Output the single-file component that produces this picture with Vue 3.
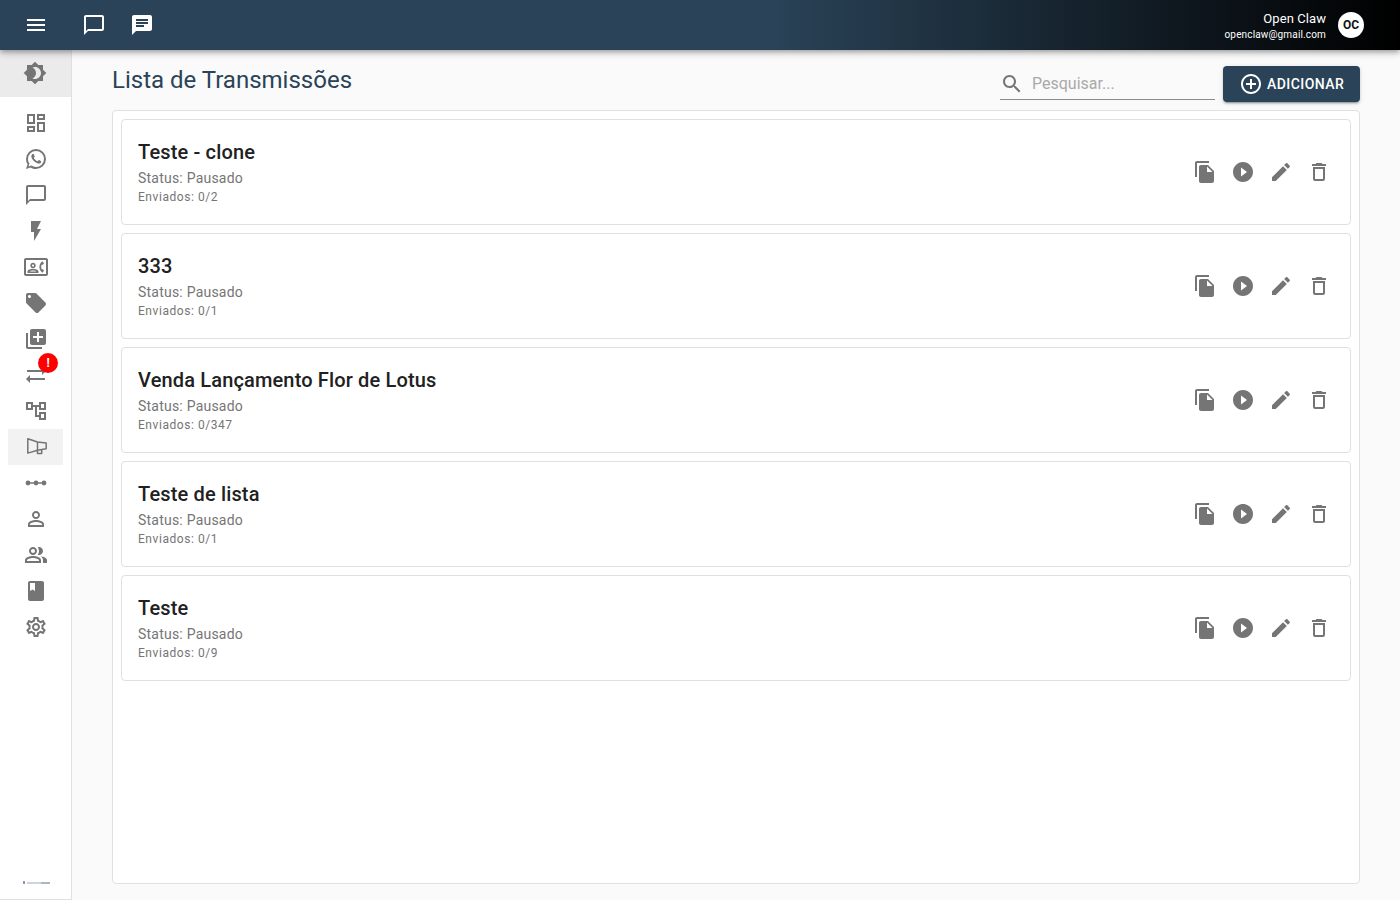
<script setup>
const icons = {
  theme: 'M20 8.69V4h-4.69L12 .69 8.69 4H4v4.69L.69 12 4 15.31V20h4.69L12 23.31 15.31 20H20v-4.69L23.31 12 20 8.69zM12 18c-.89 0-1.74-.2-2.5-.55C11.56 16.5 13 14.42 13 12s-1.44-4.5-3.5-5.45C10.26 6.2 11.11 6 12 6c3.31 0 6 2.69 6 6s-2.69 6-6 6z',
  menu: 'M3 18h18v-2H3v2zm0-5h18v-2H3v2zm0-7v2h18V6H3z',
  chatOutline: 'M20 2H4c-1.1 0-2 .9-2 2v18l4-4h14c1.1 0 2-.9 2-2V4c0-1.1-.9-2-2-2zm0 14H6l-2 2V4h16v12z',
  chat: 'M20 2H4c-1.1 0-1.99.9-1.99 2L2 22l4-4h14c1.1 0 2-.9 2-2V4c0-1.1-.9-2-2-2zM6 9h12v2H6V9zm8 5H6v-2h8v2zm4-6H6V6h12v2z',
  search: 'M15.5 14h-.79l-.28-.27C15.41 12.59 16 11.11 16 9.5 16 5.91 13.09 3 9.5 3S3 5.91 3 9.5 5.91 16 9.5 16c1.61 0 3.09-.59 4.23-1.57l.27.28v.79l5 4.99L20.49 19l-4.99-5zm-6 0C7.01 14 5 11.99 5 9.5S7.01 5 9.5 5 14 7.01 14 9.5 11.99 14 9.5 14z',
  add: 'M13 7h-2v4H7v2h4v4h2v-4h4v-2h-4V7zm-1-5C6.48 2 2 6.48 2 12s4.48 10 10 10 10-4.48 10-10S17.52 2 12 2zm0 18c-4.41 0-8-3.59-8-8s3.59-8 8-8 8 3.59 8 8-3.59 8-8 8z',
  copy: 'M16 1H4c-1.1 0-2 .9-2 2v14h2V3h12V1zm-1 4l6 6v10c0 1.1-.9 2-2 2H7.99C6.89 23 6 22.1 6 21l.01-14c0-1.1.89-2 1.99-2h7zm-1 7h5.5L14 6.5V12z',
  play: 'M12 2C6.48 2 2 6.48 2 12s4.48 10 10 10 10-4.48 10-10S17.52 2 12 2zm-2 14.5v-9l6 4.5-6 4.5z',
  edit: 'M3 17.25V21h3.75L17.81 9.94l-3.75-3.75L3 17.25zM20.71 7.04c.39-.39.39-1.02 0-1.41l-2.34-2.34c-.39-.39-1.02-.39-1.41 0l-1.83 1.83 3.75 3.75 1.83-1.83z',
  trash: 'M6 19c0 1.1.9 2 2 2h8c1.1 0 2-.9 2-2V7H6v12zM8 9h8v10H8V9zm7.5-5l-1-1h-5l-1 1H5v2h14V4z'
}

const navItems = [
  { d: 'M19 5v2h-4V5h4M9 5v6H5V5h4m10 8v6h-4v-6h4M9 17v2H5v-2h4M21 3h-8v6h8V3zM11 3H3v10h8V3zm10 8h-8v10h8V11zm-10 4H3v6h8v-6z' },
  { d: 'M16.75 13.96c.25.13.41.2.46.3.06.11.04.61-.21 1.18-.2.56-1.24 1.1-1.7 1.12-.46.02-.47.36-2.96-.73-2.49-1.09-3.99-3.75-4.11-3.92-.12-.17-.96-1.38-.92-2.61.05-1.22.69-1.8.95-2.04.24-.26.51-.29.68-.26h.47c.15 0 .36-.06.55.45l.69 1.87c.06.13.1.28.01.44l-.27.41-.39.42c-.12.12-.26.25-.12.5.12.26.62 1.09 1.32 1.78.91.88 1.71 1.17 1.95 1.3.24.14.39.12.54-.04l.81-.94c.19-.25.35-.19.58-.11l1.67.88M12 2a10 10 0 0 1 10 10 10 10 0 0 1-10 10c-1.97 0-3.8-.57-5.35-1.55L2 22l1.55-4.65A9.969 9.969 0 0 1 2 12 10 10 0 0 1 12 2m0 2a8 8 0 0 0-8 8c0 1.72.54 3.31 1.46 4.61L4.5 19.5l2.89-.96A7.95 7.95 0 0 0 12 20a8 8 0 0 0 8-8 8 8 0 0 0-8-8z' },
  { d: 'M20 2H4c-1.1 0-2 .9-2 2v18l4-4h14c1.1 0 2-.9 2-2V4c0-1.1-.9-2-2-2zm0 14H6l-2 2V4h16v12z' },
  { d: 'M7 2v11h3v9l7-12h-4l4-8z' },
  { d: 'M22 3H2C.9 3 0 3.9 0 5v14c0 1.1.9 2 2 2h20c1.1 0 2-.9 2-2V5c0-1.1-.9-2-2-2zm0 16H2V5h20v14zM9 7.7c-1.5 0-2.7 1.2-2.7 2.7S7.5 13.1 9 13.1s2.7-1.2 2.7-2.7S10.5 7.7 9 7.7zm0 1.7c.55 0 1 .45 1 1s-.45 1-1 1-1-.45-1-1 .45-1 1-1zM3.5 18v-1.4c0-1.9 3.6-2.8 5.5-2.8s5.5.9 5.5 2.8V18h-11zm2.2-1.6h6.6c-.6-.5-2.1-.9-3.3-.9s-2.7.4-3.3.9zM18.3 6.3l1.7 1.9-1.1 1.5h-1.3c-.25.7-.35 1.5-.35 2.3s.1 1.6.35 2.3h1.3l1.1 1.5-1.7 1.9c-1.7-1.3-2.9-3.4-2.9-5.7s1.2-4.4 2.9-5.7z', rule: 'evenodd' },
  { d: 'M21.41 11.58l-9-9C12.05 2.22 11.55 2 11 2H4c-1.1 0-2 .9-2 2v7c0 .55.22 1.05.59 1.42l9 9c.36.36.86.58 1.41.58.55 0 1.05-.22 1.41-.59l7-7c.37-.36.59-.86.59-1.41 0-.55-.23-1.06-.59-1.42zM5.5 7C4.67 7 4 6.33 4 5.5S4.67 4 5.5 4 7 4.67 7 5.5 6.33 7 5.5 7z' },
  { d: 'M4 6H2v14c0 1.1.9 2 2 2h14v-2H4V6zm16-4H8c-1.1 0-2 .9-2 2v12c0 1.1.9 2 2 2h12c1.1 0 2-.9 2-2V4c0-1.1-.9-2-2-2zm-1 9h-4v4h-2v-4H9V9h4V5h2v4h4v2z' },
  { d: 'M22 8l-4-4v3H3v2h15v3l4-4zM2 16l4 4v-3h15v-2H6v-3l-4 4z', badge: '!' },
  { d: 'M22 11V3h-7v3H9V3H2v8h7V8h2v10h4v3h7v-8h-7v3h-2V8h2v3h7zM7 9H4V5h3v4zm10 6h3v4h-3v-4zm0-10h3v4h-3V5z' },
  { d: 'M3.8 3.8l9.7 3.2 8.7 1.1v5.6l-8.7 1.6-9.7 2.8zM13.5 7v8.3M13.5 15.3v3.2h4.2v-3.9', stroke: true, active: true },
  { d: 'M4 9.6a2.4 2.4 0 1 1 0 4.8 2.4 2.4 0 1 1 0-4.8zM12 9.6a2.4 2.4 0 1 1 0 4.8 2.4 2.4 0 1 1 0-4.8zM20 9.6a2.4 2.4 0 1 1 0 4.8 2.4 2.4 0 1 1 0-4.8zM4 11.3h16v1.4H4z' },
  { d: 'M12 5.9c1.16 0 2.1.94 2.1 2.1s-.94 2.1-2.1 2.1S9.9 9.16 9.9 8s.94-2.1 2.1-2.1m0 9c2.97 0 6.1 1.46 6.1 2.1v1.1H5.9V17c0-.64 3.13-2.1 6.1-2.1M12 4C9.79 4 8 5.79 8 8s1.79 4 4 4 4-1.79 4-4-1.79-4-4-4zm0 9c-2.67 0-8 1.34-8 4v3h16v-3c0-2.66-5.33-4-8-4z' },
  { d: 'M16.67 13.13C18.04 14.06 19 15.32 19 17v3h4v-3c0-2.18-3.57-3.47-6.33-3.87zM15 12c2.21 0 4-1.79 4-4s-1.79-4-4-4c-.47 0-.91.1-1.33.24C14.5 5.27 15 6.58 15 8s-.5 2.73-1.33 3.76c.42.14.86.24 1.33.24zM9 12c2.21 0 4-1.79 4-4s-1.79-4-4-4-4 1.79-4 4 1.79 4 4 4zm0-6c1.1 0 2 .9 2 2s-.9 2-2 2-2-.9-2-2 .9-2 2-2zM9 13c-2.67 0-8 1.34-8 4v3h16v-3c0-2.66-5.33-4-8-4zm6 5H3v-.99C3.2 16.29 6.3 15 9 15s5.8 1.29 6 2v1z' },
  { d: 'M18 2H6c-1.1 0-2 .9-2 2v16c0 1.1.9 2 2 2h12c1.1 0 2-.9 2-2V4c0-1.1-.9-2-2-2zM6 4h5v8l-2.5-1.5L6 12V4z' },
  { d: 'M19.43 12.98c.04-.32.07-.64.07-.98 0-.34-.03-.66-.07-.98l2.11-1.65c.19-.15.24-.42.12-.64l-2-3.46c-.09-.16-.26-.25-.44-.25-.06 0-.12.01-.17.03l-2.49 1c-.52-.4-1.08-.73-1.69-.98l-.38-2.65C14.46 2.18 14.25 2 14 2h-4c-.25 0-.46.18-.49.42l-.38 2.65c-.61.25-1.17.59-1.69.98l-2.49-1c-.06-.02-.12-.03-.18-.03-.17 0-.34.09-.43.25l-2 3.46c-.13.22-.07.49.12.64l2.11 1.65c-.04.32-.07.65-.07.98 0 .33.03.66.07.98l-2.11 1.65c-.19.15-.24.42-.12.64l2 3.46c.09.16.26.25.44.25.06 0 .12-.01.17-.03l2.49-1c.52.4 1.08.73 1.69.98l.38 2.65c.03.24.24.42.49.42h4c.25 0 .46-.18.49-.42l.38-2.65c.61-.25 1.17-.59 1.69-.98l2.49 1c.06.02.12.03.18.03.17 0 .34-.09.43-.25l2-3.46c.12-.22.07-.49-.12-.64l-2.11-1.65zm-1.98-1.71c.04.31.05.52.05.73 0 .21-.02.43-.05.73l-.14 1.13.89.7 1.08.84-.7 1.21-1.27-.51-1.04-.42-.9.68c-.43.32-.84.56-1.25.73l-1.06.43-.16 1.13-.2 1.35h-1.4l-.19-1.35-.16-1.13-1.06-.43c-.43-.18-.83-.41-1.23-.71l-.91-.7-1.06.43-1.27.51-.7-1.21 1.08-.84.89-.7-.14-1.13c-.03-.31-.05-.54-.05-.74s.02-.43.05-.73l.14-1.13-.89-.7-1.08-.84.7-1.21 1.27.51 1.04.42.9-.68c.43-.32.84-.56 1.25-.73l1.06-.43.16-1.13.2-1.35h1.39l.19 1.35.16 1.13 1.06.43c.43.18.83.41 1.23.71l.91.7 1.06-.43 1.27-.51.7 1.21-1.07.85-.89.7.14 1.13zM12 8c-2.21 0-4 1.79-4 4s1.79 4 4 4 4-1.79 4-4-1.79-4-4-4zm0 6c-1.1 0-2-.9-2-2s.9-2 2-2 2 .9 2 2-.9 2-2 2z' }
]

const broadcasts = [
  { name: 'Teste - clone', sent: '0/2' },
  { name: '333', sent: '0/1' },
  { name: 'Venda Lançamento Flor de Lotus', sent: '0/347' },
  { name: 'Teste de lista', sent: '0/1' },
  { name: 'Teste', sent: '0/9' }
]

const actions = [icons.copy, icons.play, icons.edit, icons.trash]
</script>

<template>
  <div class="app">
    <header class="topbar">
      <div class="top-left">
        <button class="top-btn menu-btn"><svg class="ic" viewBox="0 0 24 24"><path :d="icons.menu" /></svg></button>
        <button class="top-btn"><svg class="ic" viewBox="0 0 24 24"><path :d="icons.chatOutline" /></svg></button>
        <button class="top-btn"><svg class="ic" viewBox="0 0 24 24"><path :d="icons.chat" /></svg></button>
      </div>
      <div class="user">
        <div class="user-text">
          <div class="user-name">Open Claw</div>
          <div class="user-mail">openclaw@gmail.com</div>
        </div>
        <div class="avatar">OC</div>
      </div>
    </header>

    <div class="body">
      <aside class="sidebar">
        <div class="theme-row"><svg class="ic" viewBox="0 0 24 24"><path :d="icons.theme" /></svg></div>
        <nav class="nav">
          <div v-for="(item, i) in navItems" :key="i" class="nav-item" :class="{ active: item.active }">
            <svg class="ic" :class="{ outline: item.stroke }" viewBox="0 0 24 24"><path :d="item.d" :fill-rule="item.rule" /></svg>
            <span v-if="item.badge" class="badge">{{ item.badge }}</span>
          </div>
        </nav>
        <div class="logo">
          <svg width="27" height="3" viewBox="0 0 27 3">
            <rect x="0" y="0" width="2" height="3" fill="#8a98a8" />
            <rect x="4" y="1" width="14" height="2" fill="#cdd4db" />
            <rect x="18" y="1" width="9" height="2" fill="#aab6c2" />
          </svg>
        </div>
      </aside>

      <main class="main">
        <div class="page-head">
          <h1 class="page-title">Lista de Transmissões</h1>
          <div class="head-tools">
            <label class="search">
              <svg class="ic" viewBox="0 0 24 24"><path :d="icons.search" /></svg>
              <input class="search-input" type="text" placeholder="Pesquisar..." />
            </label>
            <button class="add-btn">
              <svg class="ic" viewBox="0 0 24 24"><path :d="icons.add" /></svg>
              <span>Adicionar</span>
            </button>
          </div>
        </div>

        <section class="paper">
          <article v-for="b in broadcasts" :key="b.name" class="card">
            <div class="card-text">
              <div class="card-title">{{ b.name }}</div>
              <div class="card-status">Status: Pausado</div>
              <div class="card-sent">Enviados: {{ b.sent }}</div>
            </div>
            <div class="card-actions">
              <button v-for="(a, i) in actions" :key="i" class="act-btn">
                <svg class="ic" viewBox="0 0 24 24"><path :d="a" /></svg>
              </button>
            </div>
          </article>
        </section>
      </main>
    </div>
  </div>
</template>

<style>
html, body { margin: 0; height: 100%; overflow: hidden; }
</style>

<style scoped>
* { box-sizing: border-box; }
.app {
  width: 1400px;
  height: 900px;
  display: flex;
  flex-direction: column;
  font-family: Roboto, "Liberation Sans", sans-serif;
  background: #fafafa;
}
button { font-family: inherit; border: 0; background: none; padding: 0; }
.ic { width: 24px; height: 24px; display: block; fill: currentColor; flex: none; }
.ic.outline { fill: none; stroke: currentColor; stroke-width: 1.5; stroke-linejoin: round; }

.topbar {
  height: 50px;
  flex: none;
  display: flex;
  align-items: center;
  justify-content: space-between;
  color: #fff;
  background: linear-gradient(to right, #2a4358 0%, #2a4358 55%, #000 100%);
  box-shadow: 0 2px 4px -1px rgba(0,0,0,.2), 0 4px 5px rgba(0,0,0,.14), 0 1px 10px rgba(0,0,0,.12);
  position: relative;
  z-index: 2;
}
.top-left { display: flex; align-items: center; padding-left: 12px; }
.top-btn { width: 48px; height: 48px; display: flex; align-items: center; justify-content: center; color: #fff; }
.menu-btn { margin-right: 10px; }
.user { display: flex; align-items: center; gap: 12px; padding-right: 36px; }
.user-text { text-align: right; padding-bottom: 1px; }
.user-name { font-size: 13px; line-height: 20px; letter-spacing: .08px; }
.user-mail { font-size: 10px; line-height: 12px; letter-spacing: .15px; }
.avatar {
  width: 26px;
  height: 26px;
  border-radius: 50%;
  background: #fff;
  color: #111;
  font-size: 12px;
  font-weight: 700;
  display: flex;
  align-items: center;
  justify-content: center;
}

.body { flex: 1; display: flex; min-height: 0; }
.sidebar {
  width: 72px;
  flex: none;
  background: #fff;
  border-right: 1px solid #e0e0e0;
  border-bottom: 1px solid #e0e0e0;
  display: flex;
  flex-direction: column;
  color: #757575;
}
.theme-row {
  height: 47px;
  padding: 0 1px 1px 0;
  background: #ebebeb;
  display: flex;
  align-items: center;
  justify-content: center;
  flex: none;
}
.nav { padding: 8px 8px 0; display: flex; flex-direction: column; flex: 1; }
.nav-item {
  position: relative;
  height: 36px;
  padding-left: 16px;
  display: flex;
  align-items: center;
  flex: none;
}
.nav-item.active { background: #f2f2f2; }
.badge {
  position: absolute;
  left: 30px;
  top: -4px;
  width: 20px;
  height: 20px;
  border-radius: 50%;
  background: #f00;
  color: #fff;
  font-size: 12px;
  font-weight: 700;
  display: flex;
  align-items: center;
  justify-content: center;
}
.logo { height: 18px; padding-left: 23px; flex: none; }
.logo svg { display: block; }

.main { flex: 1; min-width: 0; display: flex; flex-direction: column; padding: 0 40px 16px; }
.page-head { height: 60px; flex: none; display: flex; align-items: center; justify-content: space-between; }
.page-title { margin: 0; font-size: 24px; font-weight: 400; line-height: 60px; color: #2a4358; }
.head-tools { display: flex; align-items: center; gap: 8px; padding-top: 8px; }
.search {
  width: 215px;
  height: 32px;
  border-bottom: 1px solid #8c8c8c;
  display: flex;
  align-items: center;
  gap: 8px;
  color: #757575;
}
.search-input {
  flex: 1;
  min-width: 0;
  border: 0;
  outline: 0;
  background: transparent;
  padding: 0;
  font: 400 16px Roboto, sans-serif;
  color: #333;
}
.search-input::placeholder { color: #a9a9a9; opacity: 1; }
.add-btn {
  width: 137px;
  height: 36px;
  display: flex;
  align-items: center;
  gap: 4px;
  padding: 0 0 0 16px;
  border-radius: 4px;
  background: #2a4358;
  color: #fff;
  font-size: 14px;
  font-weight: 500;
  letter-spacing: .45px;
  text-transform: uppercase;
  box-shadow: 0 3px 1px -2px rgba(0,0,0,.2), 0 2px 2px rgba(0,0,0,.14), 0 1px 5px rgba(0,0,0,.12);
}

.paper {
  flex: 1;
  min-height: 0;
  background: #fff;
  border: 1px solid #e0e0e0;
  border-radius: 4px;
  padding: 8px;
  display: flex;
  flex-direction: column;
  gap: 8px;
}
.card {
  height: 106px;
  flex: none;
  border: 1px solid #e0e0e0;
  border-radius: 4px;
  padding: 16px 12px 16px 16px;
  display: flex;
  align-items: center;
  justify-content: space-between;
}
.card-text { align-self: flex-start; }
.card-title { font-size: 20px; line-height: 32px; font-weight: 500; color: #212121; letter-spacing: .15px; }
.card-status { font-size: 14px; line-height: 20px; color: #757575; letter-spacing: .22px; }
.card-sent { font-size: 12px; line-height: 18px; color: #757575; letter-spacing: .55px; }
.card-actions { display: flex; align-items: center; color: #757575; }
.act-btn { width: 38px; height: 38px; display: flex; align-items: center; justify-content: center; color: inherit; }
</style>
